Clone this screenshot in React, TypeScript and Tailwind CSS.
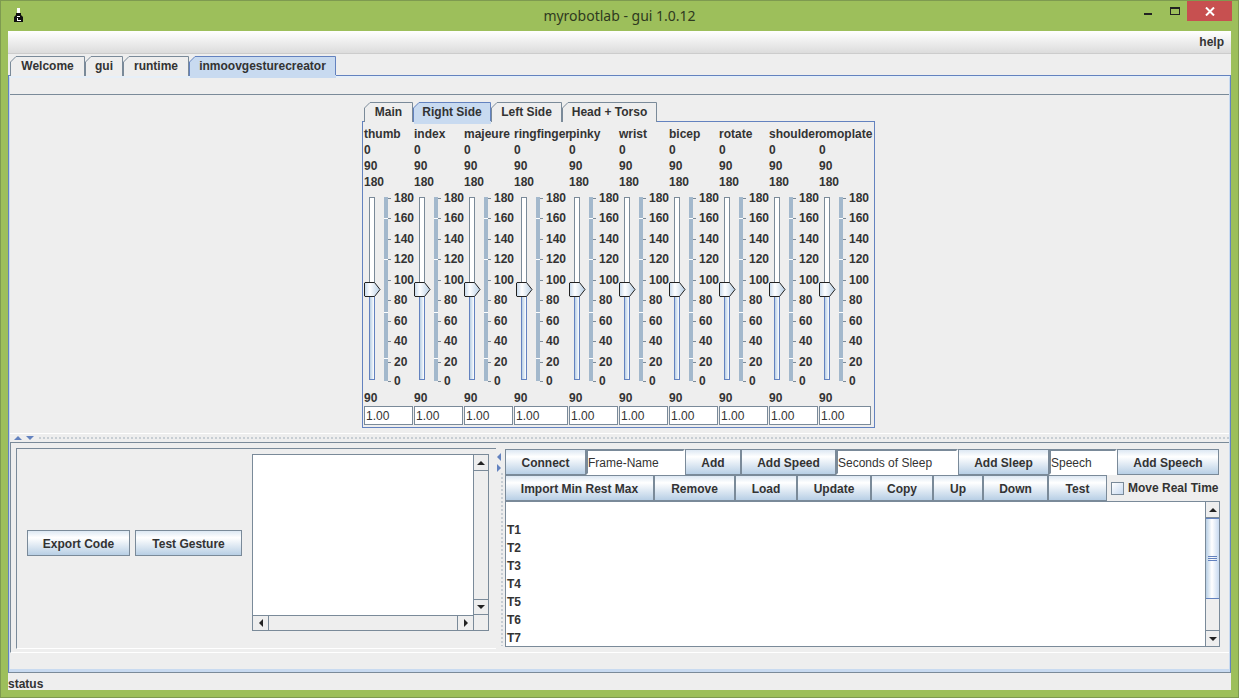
const FONT = "[font-family:Liberation_Sans,Arial,sans-serif]";
const BTN =
  "flex items-center justify-center pt-px border border-[#7a8a99] bg-[linear-gradient(#dde8f3,#ffffff_28%,#b8cfe5)] font-bold text-[12px] text-[#333]";

const COLS = [
  { name: "thumb", w: 50 },
  { name: "index", w: 50 },
  { name: "majeure", w: 50 },
  { name: "ringfinger", w: 55, off: 2 },
  { name: "pinky", w: 50 },
  { name: "wrist", w: 50 },
  { name: "bicep", w: 50 },
  { name: "rotate", w: 50 },
  { name: "shoulder", w: 50 },
  { name: "omoplate", w: 53 },
];
const TICKS = [
  { v: 180, mt: "mt-0" },
  { v: 160, mt: "mt-[6px]" },
  { v: 140, mt: "mt-[7px]" },
  { v: 120, mt: "mt-[6px]" },
  { v: 100, mt: "mt-[7px]" },
  { v: 80, mt: "mt-[6px]" },
  { v: 60, mt: "mt-[7px]" },
  { v: 40, mt: "mt-[6px]" },
  { v: 20, mt: "mt-[7px]" },
  { v: 0, mt: "mt-[5px]" },
];

function Tab({ w, label, selected }: { w: number; label: string; selected?: boolean }) {
  const h = 19;
  return (
    <div className="relative h-[19px] shrink-0 flex items-center justify-center font-bold text-[12px] text-[#333]" style={{ width: w }}>
      <svg className="absolute inset-0" width={w} height={h + 1}>
        <path
          d={`M0.5 ${h + 1} V6 L6 0.5 H${w - 0.5} V${h + 1}`}
          fill={selected ? "#c8daf0" : "#eeeeee"}
          stroke={selected ? "#6382bf" : "#7a8a99"}
        />
      </svg>
      {selected && <div className="absolute left-px right-0 top-[19px] h-[3px] bg-[#c8daf0]" />}
      <span className="relative pt-px">{label}</span>
    </div>
  );
}

function Thumb() {
  return (
    <svg className="absolute left-0 top-[92px]" width="17" height="16">
      <defs>
        <linearGradient id="thumbFill" x1="0" x2="1" y1="0" y2="0">
          <stop offset="0" stopColor="#c4d8ec" />
          <stop offset="0.35" stopColor="#ffffff" />
          <stop offset="1" stopColor="#b8cfe5" />
        </linearGradient>
      </defs>
      <path d="M1 0.5 H10.5 L16 7.5 L10.5 14.5 H1 L0.5 14 V1 Z" fill="url(#thumbFill)" stroke="#222" />
    </svg>
  );
}

function Slider({ off = 0 }: { off?: number }) {
  return (
    <div className="relative h-[200px] flex" style={{ marginLeft: off }}>
      <Thumb />
      <div className="ml-[5px] mt-[7px] w-[6px] h-[183px] flex flex-col">
        <div className="h-[92px] border border-b-0 border-[#7a8a99] bg-white" />
        <div className="flex-1 border border-[#6382bf] bg-[linear-gradient(90deg,#b8cfe5,#ffffff)]" />
      </div>
      <div className="ml-[9px] mt-[7px] w-[4px] h-[184px] flex flex-col bg-[#a3b8cc]">
        <div className="mt-[21px] h-px bg-white" />
        <div className="mt-[40px] h-px bg-white" />
        <div className="mt-[52px] h-px bg-white" />
        <div className="mt-[45px] h-px bg-white" />
      </div>
      <div className="mt-px flex flex-col">
        {TICKS.map((t) => (
          <div key={t.v} className={`${t.mt} h-[14px] flex items-center leading-[14px]`}>
            <div className="w-[3px] h-px bg-[#7a8a99] mr-[3px]" />
            {t.v}
          </div>
        ))}
      </div>
    </div>
  );
}

function Arrow({ dir, color = "#222" }: { dir: "up" | "down" | "left" | "right"; color?: string }) {
  const pts = {
    up: "0,4 8,4 4,0",
    down: "0,0 8,0 4,4",
    left: "4,0 4,8 0,4",
    right: "0,0 0,8 4,4",
  }[dir];
  const wide = dir === "up" || dir === "down";
  return (
    <svg width={wide ? 8 : 4} height={wide ? 4 : 8} className="shrink-0">
      <polygon points={pts} fill={color} />
    </svg>
  );
}

function ScrollBtn({ dir, className }: { dir: "up" | "down" | "left" | "right"; className: string }) {
  return (
    <div className={`shrink-0 flex items-center justify-center bg-[#eeeeee] border-[#7a8a99] ${className}`}>
      <Arrow dir={dir} />
    </div>
  );
}

function Field({ w, text }: { w: number; text: string }) {
  return (
    <div
      className="h-[26px] shrink-0 flex items-center pt-px bg-white border-2 border-t-[#7a8a99] border-l-[#7a8a99] border-r-white border-b-white text-[12px] text-[#333]"
      style={{ width: w }}
    >
      {text}
    </div>
  );
}

function Btn({ w, text }: { w: number; text: string }) {
  return (
    <div className={`${BTN} h-[26px] shrink-0`} style={{ width: w }}>
      {text}
    </div>
  );
}

export default function App() {
  return (
    <div className={`${FONT} w-[1239px] h-[698px] overflow-hidden bg-[#9dbf5b] border border-[#7e9a50] flex flex-col`}>
      {/* title bar */}
      <div className="h-[30px] shrink-0 grid grid-cols-[1fr_auto_1fr] text-[14px] text-[#2f3a20] [font-family:Noto_Sans,sans-serif]">
        <div className="pl-[13px] pt-[7px]">
          <svg width="9" height="15" viewBox="0 0 9 15">
            <rect x="3" y="0" width="3" height="5" fill="#fff" />
            <path d="M2 5 H7 V7 L9 9 V14 H0 V9 L2 7 Z" fill="#111" />
            <rect x="3" y="8" width="3" height="1" fill="#fff" />
            <rect x="3" y="10" width="1" height="3" fill="#fff" />
            <rect x="4" y="12" width="3" height="1" fill="#fff" />
          </svg>
        </div>
        <div className="pt-[5px] leading-[20px]">myrobotlab - gui 1.0.12</div>
        <div className="flex justify-end pr-[6px] items-start">
          <div className="mt-[12px] mr-[18px] w-[8px] h-[2px] bg-[#222]" />
          <div className="mt-[6px] mr-[7px] w-[10px] h-[8px] border border-t-2 border-[#222]" />
          <div className="w-[45px] h-[20px] bg-[#c75050] flex items-center justify-center">
            <svg width="10" height="9" viewBox="0 0 10 9">
              <path d="M1 0.5 L9 8.5 M9 0.5 L1 8.5" stroke="#fff" strokeWidth="2" />
            </svg>
          </div>
        </div>
      </div>

      {/* window body */}
      <div className="mx-[7px] h-[659px] flex flex-col bg-[#eeeeee]">
        <div className="h-[22px] shrink-0 bg-[linear-gradient(#ffffff,#dcdcdc)] flex items-center justify-end pr-[7px] font-bold text-[12px] text-[#333]">
          help
        </div>
        <div className="h-px shrink-0 bg-[#cccccc]" />
        <div className="h-[2px] shrink-0" />

        {/* top tabs */}
        <div className="h-[19px] shrink-0 flex pl-[2px] relative z-10">
          <Tab w={75} label="Welcome" />
          <Tab w={38} label="gui" />
          <Tab w={66} label="runtime" />
          <Tab w={147} label="inmoovgesturecreator" selected />
        </div>

        {/* tab panel */}
        <div className="h-[598px] shrink-0 border border-[#6382bf] border-b-[#7a8a99] flex flex-col bg-[#eeeeee]">
          <div className="flex-1 min-h-0 border-x-[1px] border-b-[3px] border-t-[2px] border-[#c8daf0] border-t-[#e6eff8] flex flex-col">
            <div className="h-[16px] shrink-0" />

            {/* upper pane */}
            <div className="h-[339px] shrink-0 border-t border-[#7a8a99] pt-[7px] pr-[2px]">
              <div className="w-[513px] mx-auto">
                <div className="h-[19px] flex pl-[2px] relative z-10">
                  <Tab w={49} label="Main" />
                  <Tab w={78} label="Right Side" selected />
                  <Tab w={71} label="Left Side" />
                  <Tab w={95} label="Head + Torso" />
                </div>
                <div className="h-[307px] border border-[#6382bf] bg-[#eeeeee] pl-px pt-[4px] flex font-bold text-[12px] text-[#333]">
                  {COLS.map((c) => (
                    <div key={c.name} className="shrink-0" style={{ width: c.w }}>
                      <div className="h-4 leading-4 whitespace-nowrap">{c.name}</div>
                      <div className="h-4 leading-4">0</div>
                      <div className="h-4 leading-4">90</div>
                      <div className="h-4 leading-4">180</div>
                      <Slider off={c.off} />
                      <div className="h-4 leading-4">90</div>
                      <div
                        className="h-[19px] border border-[#7a8a99] bg-white pl-[1px] leading-[18px] font-normal"
                        style={{ width: c.w - 1 }}
                      >
                        1.00
                      </div>
                    </div>
                  ))}
                </div>
              </div>
            </div>

            {/* horizontal splitter */}
            <div className="h-[9px] shrink-0 border-t border-white flex items-center pl-[4px] gap-[4px]">
              <Arrow dir="up" color="#6382bf" />
              <Arrow dir="down" color="#6382bf" />
              <div className="flex-1 h-[4px] bg-[radial-gradient(circle,#9aa8b5_0.6px,transparent_0.8px)] bg-[length:4px_4px]" />
            </div>

            {/* lower pane */}
            <div className="h-[211px] shrink-0 border-t border-l border-b border-t-[#7a8a99] border-l-[#7a8a99] border-b-white flex">
              <div className="ml-[5px] mt-[5px] w-[480px] h-[201px] shrink-0 border-t border-l border-b border-t-[#7a8a99] border-l-[#7a8a99] border-b-white pt-[5px]">
                <div className="h-[177px] flex items-start">
                  <div className={`${BTN} ml-[10px] mt-[76px] w-[103px] h-[26px]`}>Export Code</div>
                  <div className={`${BTN} ml-[5px] mt-[76px] w-[107px] h-[26px]`}>Test Gesture</div>
                  <div className="ml-[10px] w-[237px] h-[177px] border-l border-t border-[#7a8a99] flex">
                    <div className="flex-1 flex flex-col">
                      <div className="flex-1 bg-white" />
                      <div className="h-[16px] flex border-t border-b border-[#7a8a99] bg-[#eeeeee]">
                        <ScrollBtn dir="left" className="w-[16px] border-r" />
                        <div className="flex-1" />
                        <ScrollBtn dir="right" className="w-[16px] border-l" />
                      </div>
                    </div>
                    <div className="w-[16px] flex flex-col border-r border-l border-[#7a8a99] bg-[#eeeeee]">
                      <ScrollBtn dir="up" className="h-[16px] border-b" />
                      <div className="flex-1" />
                      <ScrollBtn dir="down" className="h-[16px] border-y" />
                      <div className="h-[16px] border-b border-[#7a8a99]" />
                    </div>
                  </div>
                </div>
              </div>

              {/* vertical splitter */}
              <div className="w-[9px] shrink-0 mt-[6px] flex flex-col pl-px pt-[4px]">
                <Arrow dir="left" color="#6382bf" />
                <div className="h-[3px] shrink-0" />
                <Arrow dir="right" color="#6382bf" />
                <div className="ml-[3px] w-[4px] flex-1 mb-[6px] bg-[radial-gradient(circle,#9aa8b5_0.6px,transparent_0.8px)] bg-[length:4px_4px]" />
              </div>

              <div className="mt-[6px] w-[716px] h-[198px] shrink-0 flex flex-col">
                <div className="h-[26px] flex shrink-0">
                  <Btn w={81} text="Connect" />
                  <Field w={99} text="Frame-Name" />
                  <Btn w={56} text="Add" />
                  <Btn w={95} text="Add Speed" />
                  <Field w={122} text="Seconds of Sleep" />
                  <Btn w={91} text="Add Sleep" />
                  <Field w={68} text="Speech" />
                  <Btn w={102} text="Add Speech" />
                </div>
                <div className="h-[26px] flex shrink-0">
                  <Btn w={149} text="Import Min Rest Max" />
                  <Btn w={81} text="Remove" />
                  <Btn w={62} text="Load" />
                  <Btn w={74} text="Update" />
                  <Btn w={62} text="Copy" />
                  <Btn w={50} text="Up" />
                  <Btn w={65} text="Down" />
                  <Btn w={59} text="Test" />
                  <div className="ml-[4px] flex items-center whitespace-nowrap font-bold text-[12px] text-[#333]">
                    <div className="w-[13px] h-[13px] shrink-0 border border-[#7a8a99] bg-[linear-gradient(135deg,#ffffff,#c8daf0)] mr-[4px]" />
                    Move Real Time
                  </div>
                </div>
                <div className="h-[146px] shrink-0 flex bg-white border-b border-l border-t border-[#7a8a99] w-[715px]">
                  <div className="flex-1 pt-[19px] pl-px font-bold text-[12px] text-[#333] overflow-hidden">
                    {["T1", "T2", "T3", "T4", "T5", "T6", "T7"].map((t) => (
                      <div key={t} className="h-[18px] leading-[18px]">
                        {t}
                      </div>
                    ))}
                  </div>
                  <div className="w-[15px] shrink-0 flex flex-col border-l border-r border-[#7a8a99] bg-[#eeeeee]">
                    <ScrollBtn dir="up" className="h-[16px] border-b" />
                    <div className="h-[81px] shrink-0 border-y border-[#6382bf] bg-[linear-gradient(90deg,#b8cfe5,#ffffff_45%,#c8daf0)] flex flex-col items-center justify-center gap-px">
                      <div className="w-[9px] h-px bg-[#6382bf]" />
                      <div className="w-[9px] h-px bg-[#6382bf]" />
                      <div className="w-[9px] h-px bg-[#6382bf]" />
                    </div>
                    <div className="flex-1" />
                    <ScrollBtn dir="down" className="h-[16px] border-t" />
                  </div>
                </div>
              </div>
            </div>
          </div>
        </div>

        <div className="flex-1 flex items-center pt-[2px] font-bold text-[12px] text-[#333]">status</div>
      </div>
    </div>
  );
}
